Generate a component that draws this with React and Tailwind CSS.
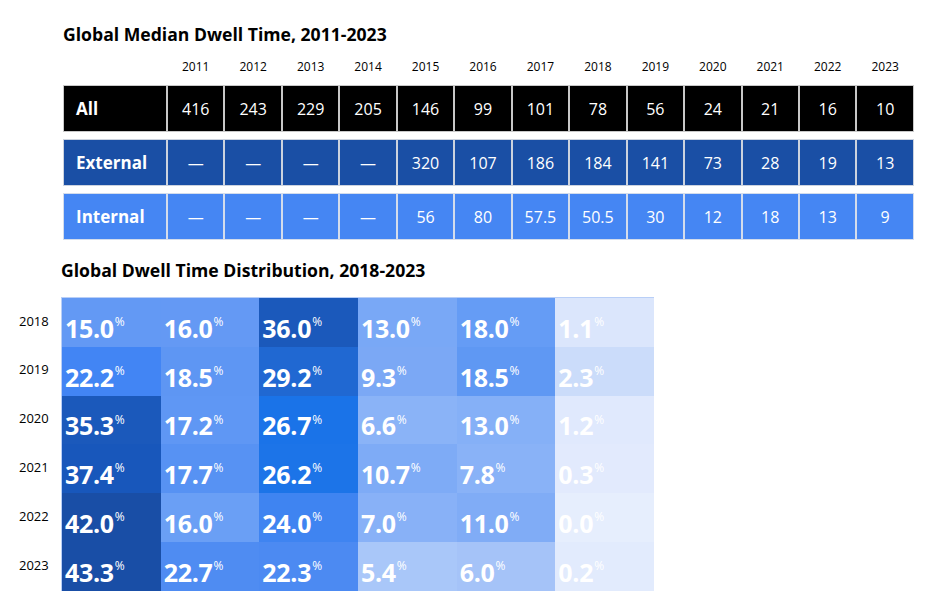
import React from "react";

const years = ["2011","2012","2013","2014","2015","2016","2017","2018","2019","2020","2021","2022","2023"];

const tableRows = [
  { label: "All", bg: "bg-[#000000]", border: "border-[#c8c8c8]", values: ["416","243","229","205","146","99","101","78","56","24","21","16","10"] },
  { label: "External", bg: "bg-[#1a4fa5]", border: "border-[#ccd3df]", values: ["—","—","—","—","320","107","186","184","141","73","28","19","13"] },
  { label: "Internal", bg: "bg-[#4586f3]", border: "border-[#d3dcec]", values: ["—","—","—","—","56","80","57.5","50.5","30","12","18","13","9"] },
];

const heat = [
  { year: "2018", cells: [["15.0","bg-[#6399f4]"],["16.0","bg-[#6499f4]"],["36.0","bg-[#1b59bb]"],["13.0","bg-[#79a8f6]"],["18.0","bg-[#659cf5]"],["1.1","bg-[#dbe6fc]"]] },
  { year: "2019", cells: [["22.2","bg-[#4285f4]"],["18.5","bg-[#5e96f3]"],["29.2","bg-[#2068d2]"],["9.3","bg-[#7ba8f5]"],["18.5","bg-[#5f98f3]"],["2.3","bg-[#cbdcfa]"]] },
  { year: "2020", cells: [["35.3","bg-[#1b59bb]"],["17.2","bg-[#5f97f4]"],["26.7","bg-[#1a73e8]"],["6.6","bg-[#8ab3f7]"],["13.0","bg-[#85b0f7]"],["1.2","bg-[#e0e9fd]"]] },
  { year: "2021", cells: [["37.4","bg-[#1857bb]"],["17.7","bg-[#5792f3]"],["26.2","bg-[#1c74e8]"],["10.7","bg-[#7eabf6]"],["7.8","bg-[#89b2f7]"],["0.3","bg-[#e2eafd]"]] },
  { year: "2022", cells: [["42.0","bg-[#194ea6]"],["16.0","bg-[#6a9ff5]"],["24.0","bg-[#3f84f1]"],["7.0","bg-[#88b1f7]"],["11.0","bg-[#80acf6]"],["0.0","bg-[#e6eefd]"]] },
  { year: "2023", cells: [["43.3","bg-[#194ea6]"],["22.7","bg-[#4f8cf2]"],["22.3","bg-[#4c8af2]"],["5.4","bg-[#a9c7f9]"],["6.0","bg-[#a5c3f8]"],["0.2","bg-[#e2ebfd]"]] },
];

export default function App() {
  return (
    <div className="w-[932px] h-[600px] bg-white overflow-hidden font-['Open_Sans',_'Liberation_Sans',_sans-serif] text-black">
      {/* Table section */}
      <div className="pl-[63px] pt-[24px]">
        <div className="h-[20px] leading-[20px] text-[17.6px] font-bold">
          Global Median Dwell Time, 2011-2023
        </div>
        <div className="mt-[13px] grid grid-cols-[104px_repeat(13,57.46px)] h-[20px]">
          <div />
          {years.map((y) => (
            <div key={y} className="flex items-center justify-center text-[12px] leading-[20px]">
              {y}
            </div>
          ))}
        </div>
        <div className="mt-[8px] flex flex-col gap-[7px]">
          {tableRows.map((r) => (
            <div key={r.label} className="grid grid-cols-[104px_repeat(13,57.46px)] h-[47px] text-white">
              <div className={`${r.bg} ${r.border} border flex items-center pl-[12px] text-[17px] font-bold`}>
                {r.label}
              </div>
              {r.values.map((v, i) => (
                <div key={i} className={`${r.bg} ${r.border} border flex items-center justify-center text-[16px]`}>
                  {v}
                </div>
              ))}
            </div>
          ))}
        </div>
      </div>

      {/* Heatmap section */}
      <div className="pl-[61px] mt-[20px] h-[20px] leading-[20px] text-[17.6px] font-bold">
        Global Dwell Time Distribution, 2018-2023
      </div>
      <div className="mt-[17px] flex">
        <div className="w-[61px] flex flex-col">
          {heat.map((r) => (
            <div key={r.year} className="h-[48.83px] flex items-center pl-[19px] text-[13px]">
              {r.year}
            </div>
          ))}
        </div>
        <div className="w-[593px] grid grid-cols-6 border-l border-t border-[#b9cff7]">
          {heat.map((r) =>
            r.cells.map(([v, bg], i) => (
              <div key={r.year + i} className={`${bg} h-[48.83px] flex items-end pl-[3px] pb-[6px] text-white`}>
                <span className="text-[25px] font-bold leading-none tracking-[-0.3px]">{v}</span>
                <span className="self-start mt-[18px] ml-[1px] text-[12px] leading-none font-normal">%</span>
              </div>
            ))
          )}
        </div>
      </div>
    </div>
  );
}
